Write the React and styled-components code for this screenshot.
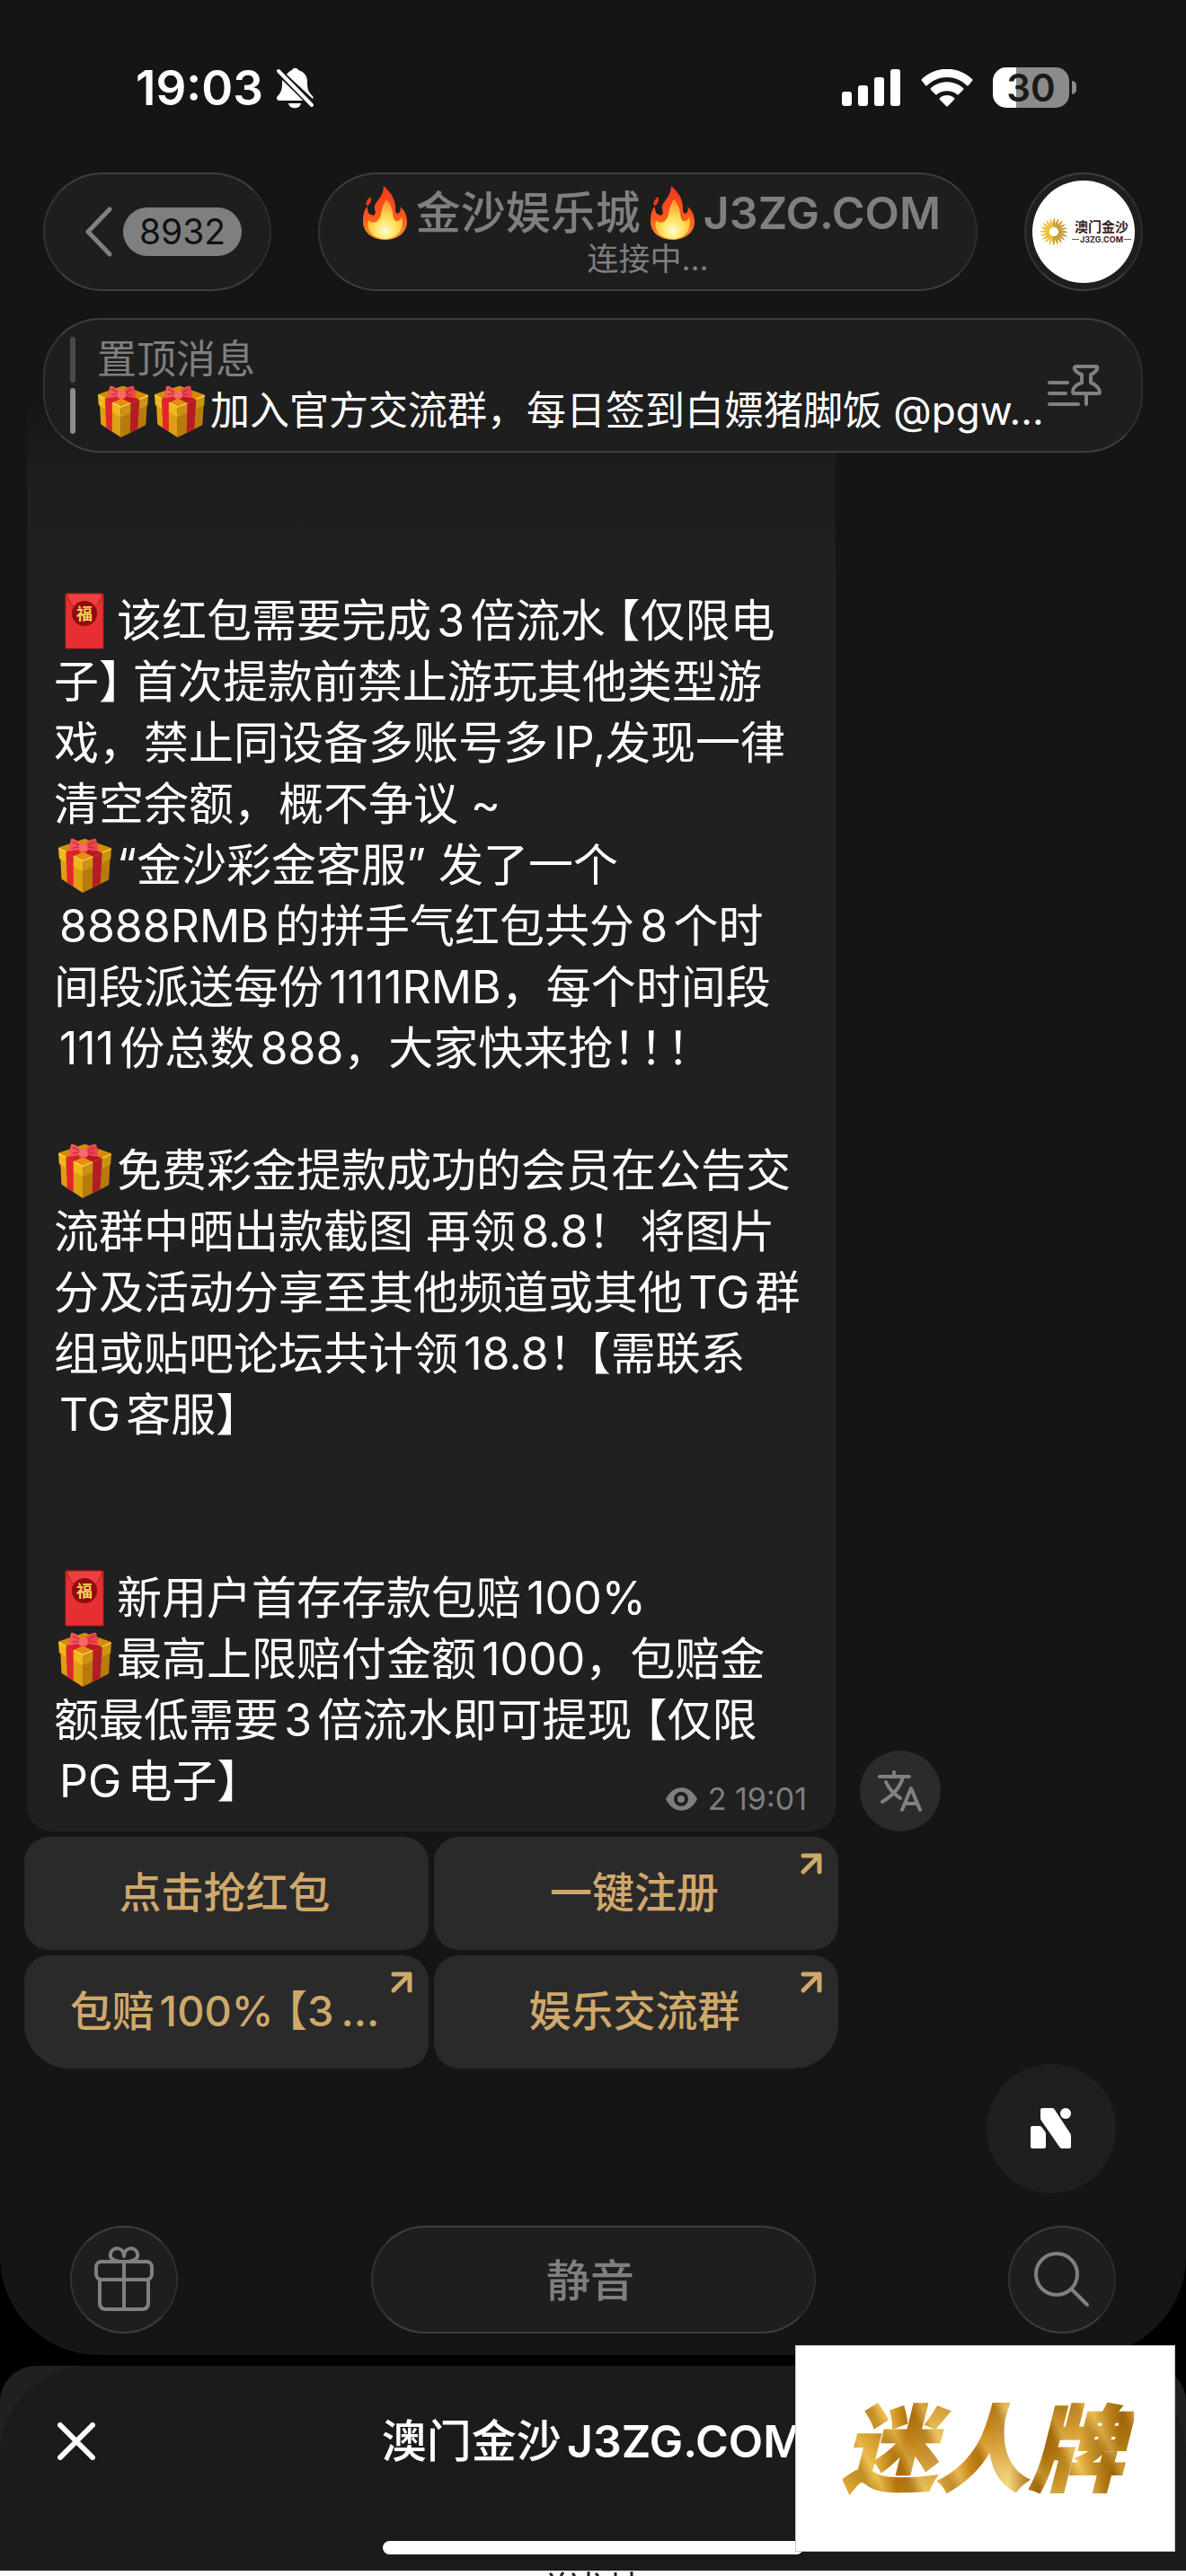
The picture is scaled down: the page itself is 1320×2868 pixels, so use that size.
import React from 'react';
import styled, { createGlobalStyle } from 'styled-components';

const GlobalStyle = createGlobalStyle`
  * {
    box-sizing: border-box;
  }

  body {
    margin: 0;
    background: #000;
    color: #fff;
    font-family: Inter, 'Noto Sans CJK SC', sans-serif;
    text-autospace: normal;
  }

  button {
    margin: 0;
    padding: 0;
    border: 0;
    color: inherit;
    background: none;
    font: inherit;
    cursor: pointer;
  }

  svg {
    display: block;
    flex: none;
  }
`;

const Page = styled.div`
  position: relative;
  display: flex;
  flex-direction: column;
  min-height: 100vh;
  overflow: hidden;
`;

const Chat = styled.main`
  position: relative;
  flex: 1;
  display: flex;
  flex-direction: column;
  background: #151515;
  border-radius: 0 0 110px 110px;
`;

const Latin = styled.span`
  font-weight: 600;
`;

/* status bar */

const StatusBar = styled.div`
  display: flex;
  justify-content: space-between;
  align-items: center;
  height: 192px;
  padding: 3px 122px 0 151px;
`;

const StatusGroup = styled.div`
  display: flex;
  align-items: center;
  gap: ${({ $gap }) => $gap}px;
`;

const Time = styled.span`
  font-size: 53px;
  font-weight: 600;
  line-height: 60px;
`;

const Battery = styled.div`
  display: flex;
  align-items: center;
  gap: 3px;
`;

const BatteryBody = styled.div`
  width: 85px;
  height: 45px;
  border-radius: 15px;
  background: linear-gradient(90deg, #fff 26px, #8b8b8b 26px);
  color: #1a1a1a;
  font-size: 42px;
  font-weight: 600;
  line-height: 45px;
  text-align: center;
`;

const BatteryCap = styled.div`
  width: 5px;
  height: 15px;
  border-radius: 0 8px 8px 0;
  background: #8b8b8b;
`;

/* header */

const Header = styled.header`
  display: flex;
  gap: 52px;
  padding: 0 48px;
`;

const glass = `
  border: 2px solid;
  border-color: #3e3e3e #2d2d2d #3e3e3e #333;
  background: #1e1e1e;
`;

const BackButton = styled.button`
  ${glass}
  display: flex;
  align-items: center;
  justify-content: center;
  gap: 12px;
  width: 254px;
  height: 132px;
  padding-right: 14px;
  padding-left: 28px;
  border-radius: 66px;
`;

const Unread = styled.span`
  height: 54px;
  padding: 0 18px;
  border-radius: 27px;
  background: #7f7f7f;
  color: #111;
  font-size: 39px;
  line-height: 54px;
`;

const TitlePill = styled.button`
  ${glass}
  flex: 1;
  display: flex;
  flex-direction: column;
  align-items: center;
  height: 132px;
  padding-top: 12px;
  border-radius: 66px;
  white-space: nowrap;
`;

const Title = styled.span`
  display: flex;
  align-items: center;
  gap: 10px;
  padding-left: 8px;
  color: #7f7f7f;
  font-size: 50px;
  font-weight: 500;
  line-height: 62px;
`;

const Subtitle = styled.span`
  color: #7f7f7f;
  font-size: 35px;
  line-height: 40px;
`;

const AvatarButton = styled.button`
  ${glass}
  display: grid;
  place-items: center;
  width: 132px;
  height: 132px;
  border-radius: 50%;
`;

const AvatarFace = styled.span`
  display: flex;
  align-items: center;
  gap: 3px;
  width: 114px;
  height: 114px;
  padding-left: 7px;
  border-radius: 50%;
  background: #fff;
  color: #3b2424;
`;

const AvatarText = styled.span`
  display: flex;
  flex-direction: column;
  align-items: center;
  font-size: 15px;
  font-weight: 700;
  line-height: 17px;
`;

const AvatarDomain = styled.small`
  display: flex;
  align-items: center;
  gap: 1px;
  font-size: 9px;
  line-height: 11px;

  &::before,
  &::after {
    content: '';
    width: 8px;
    height: 1px;
    background: #6b5a50;
  }
`;

const Pinned = styled.section`
  ${glass}
  position: relative;
  z-index: 1;
  display: flex;
  align-items: center;
  height: 150px;
  margin: 30px 48px 0;
  padding: 0 44px 0 28px;
  border-radius: 64px;
`;

const PinnedBars = styled.div`
  display: grid;
  gap: 6px;
  margin-right: 24px;
`;

const PinnedBar = styled.span`
  width: 6px;
  height: 51px;
  border-radius: 3px;
  background: ${({ $active }) => ($active ? '#8c8c8c' : '#4a4a4a')};
`;

const PinnedText = styled.div`
  flex: 1;
  min-width: 0;
  font-size: 44px;
  line-height: 57px;
  white-space: nowrap;
`;

const PinnedLabel = styled.div`
  color: #7f7f7f;
`;

const PinnedMessage = styled.div`
  display: flex;
  align-items: center;
  gap: 5px;
`;

const PinButton = styled.button`
  align-self: center;
`;

/* message */

const MessageRow = styled.div`
  display: flex;
  align-items: flex-end;
  gap: 27px;
  margin-top: -60px;
  padding: 0 30px;
`;

const Bubble = styled.article`
  width: 900px;
  padding: 213px 32px 22px 30px;
  border-radius: 0 0 28px 28px;
  background: linear-gradient(#151515, #1d1d1d 80px, #202020 200px);
`;

const Line = styled.div`
  display: flex;
  align-items: center;
  height: 68px;
  padding-left: ${({ $indent }) => ($indent ? 6 : 0)}px;
  font-size: 50px;
  line-height: 68px;
  white-space: pre;
`;

const EmojiCell = styled.span`
  display: inline-flex;
  justify-content: center;
  width: 68px;
  margin-right: 2px;
`;

/* full-width punctuation set on a narrower body */
const Open = styled.span`
  margin-left: 14px;
  font-feature-settings: 'halt';
`;

const Close = styled.span`
  margin-right: 13px;
  font-feature-settings: 'halt';
`;

const Mark = styled.span`
  margin-right: 5px;
  font-feature-settings: 'halt';
`;

const Meta = styled.span`
  display: flex;
  align-items: center;
  align-self: flex-end;
  gap: 11px;
  margin-left: auto;
  color: #7f7f7f;
  font-size: 34px;
  line-height: 28px;
`;

const TranslateButton = styled.button`
  display: grid;
  place-items: center;
  width: 90px;
  height: 90px;
  border-radius: 50%;
  background: #2b2b2b;
`;

const Keyboard = styled.div`
  display: grid;
  grid-template-columns: 1fr 1fr;
  gap: 6px;
  width: 906px;
  margin: 6px 27px 0;
`;

const KeyButton = styled.button`
  position: relative;
  height: 126px;
  padding-right: 4px;
  padding-bottom: 10px;
  border-radius: 28px;
  background: #2a2a2a;
  color: #cfa86b;
  font-size: 47px;
  font-weight: 500;
  white-space: pre;

  &:nth-child(3) {
    border-bottom-left-radius: 50px;
  }

  &:nth-child(4) {
    border-bottom-right-radius: 50px;
  }

  svg {
    position: absolute;
    top: 17px;
    right: 17px;
  }
`;

const Dots = styled.span`
  margin-left: 8px;
`;

const AssistButton = styled.button`
  position: absolute;
  right: 78px;
  bottom: 180px;
  display: grid;
  place-items: center;
  width: 144px;
  height: 144px;
  border-radius: 50%;
  background: #1f1f1f;
`;

const Dock = styled.footer`
  display: flex;
  justify-content: space-between;
  margin-top: auto;
  padding: 60px 78px 24px;
`;

const RoundButton = styled.button`
  ${glass}
  display: grid;
  place-items: center;
  width: 120px;
  height: 120px;
  border-radius: 50%;
`;

const MuteButton = styled.button`
  ${glass}
  width: 495px;
  height: 120px;
  padding-right: 6px;
  padding-bottom: 6px;
  border-radius: 60px;
  color: #7f7f7f;
  font-size: 49px;
  font-weight: 500;
`;

/* bottom sheet */

const Sheet = styled.section`
  margin-top: 12px;
  border-radius: 40px 40px 0 0;
  background: #202020;
`;

const SheetInner = styled.div`
  display: flex;
  flex-direction: column;
  align-items: center;
  height: 228px;
  border-radius: 100px 100px 0 0;
  background: #1b1b1b;
`;

const SheetBar = styled.div`
  display: grid;
  grid-template-columns: 1fr auto 1fr;
  align-items: center;
  width: 100%;
  height: 168px;
  padding: 0 64px;
`;

const CloseButton = styled.button`
  justify-self: start;
`;

const SheetTitle = styled.h2`
  margin: 0;
  font-size: 50px;
  font-weight: 500;
  line-height: 60px;
`;

const HomeIndicator = styled.div`
  width: 468px;
  height: 15px;
  margin-top: 27px;
  border-radius: 8px;
  background: #fff;
`;

const NextStrip = styled.div`
  display: flex;
  justify-content: center;
  height: 6px;
  background: #fff;
`;

const BrandCard = styled.aside`
  position: absolute;
  right: 12px;
  bottom: 27px;
  display: grid;
  place-items: center;
  width: 423px;
  height: 230px;
  padding-right: 6px;
  padding-bottom: 12px;
  border: 1px solid #c6c6c6;
  background: #fff;
`;

const BrandText = styled.strong`
  padding: 0 12px;
  background:
    repeating-linear-gradient(62deg, #8a540055 0 5px, #ffe48a44 16px, #b8740033 29px, #8a540055 41px),
    linear-gradient(100deg, #c48a17, #e9b844 18%, #b97a0e 26%, #f0c765 38%, #c98514 50%, #f5d988 60%, #ab6d0a 70%, #eebc4d 80%, #a9700f 92%, #d9a32c);
  background-clip: text;
  color: transparent;
  -webkit-text-stroke: 2px transparent;
  font-family: 'Noto Sans CJK SC', sans-serif;
  font-size: 104px;
  font-style: italic;
  font-weight: 900;
  line-height: 130px;
`;

const Gift = ({ size = 61 }) => (
  <svg width={size} height={size} viewBox="0 0 185 188" aria-hidden="true">
    <path d="M8 62 85 105V188L14 142Q12 140 12 137Z" fill="#dda012" />
    <path d="M85 105 179 66 175 138Q175 142 171 145L85 188Z" fill="#b97a0c" />
    <path d="M2 35Q2 32 6 31L92 2 180 33Q184 35 183 38L85 80Z" fill="#d58a0c" />
    <path d="M2 35 85 78V114L6 72Q4 71 4 68Z" fill="#f1b71e" />
    <path d="M183 37 85 78V114L178 74Q181 73 181 70Z" fill="#cb9314" />
    <path d="M2 35 85 78 183 37" fill="none" stroke="#ffd94a" strokeWidth="4" />
    <path d="M27 48 53 61V168L32 154Z" fill="#e0262b" />
    <path d="M120 64 152 51 145 157 118 171Z" fill="#b51c24" />
    <path d="M27 48 118 16 140 24 53 62Z" fill="#d81f2a" />
    <path d="M152 51 66 18 45 26 120 64Z" fill="#bd1722" />
    <path d="M64 59 85 48 108 59 85 76Z" fill="#e98b13" />
    <path d="M80 24C62 2 44-1 44 6L37 40Q38 48 46 45Q62 43 78 38Z" fill="#f2575b" />
    <path d="M92 24C110 2 131-1 132 6L138 40Q138 48 130 45Q114 43 96 38Z" fill="#ee4650" />
    <path d="M50 14Q62 16 76 30L50 34M126 14Q113 17 98 30L126 34" fill="none" stroke="#c92735" strokeWidth="4" />
    <rect x="72" y="20" width="30" height="28" rx="9" fill="#f7696b" />
  </svg>
);

const RedEnvelope = () => (
  <svg width="44" height="63" viewBox="0 0 44 63" aria-hidden="true">
    <rect x="1" y="1" width="42" height="61" rx="1" fill="#e72f31" stroke="#b31b1d" />
    <path d="M2 1Q6 15 13 17H31Q38 15 42 1Z" fill="#ef4041" stroke="#a91a1c" />
    <circle cx="22" cy="23" r="14" fill="#8f0d0f" />
    <text x="22" y="30" textAnchor="middle" fontSize="18" fontWeight="700" fill="#f6cf5a">福</text>
  </svg>
);

const Fire = () => (
  <svg width="50" height="60" viewBox="0 0 50 60" aria-hidden="true">
    <defs>
      <linearGradient id="flame" x1="0" y1="0" x2="0" y2="1">
        <stop offset="0" stopColor="#f4381c" />
        <stop offset="0.6" stopColor="#fb5a1c" />
        <stop offset="1" stopColor="#ff9a2a" />
      </linearGradient>
      <radialGradient id="flameCore" cx="0.5" cy="0.8" r="0.7">
        <stop offset="0" stopColor="#fffbd2" />
        <stop offset="0.45" stopColor="#ffe45a" />
        <stop offset="1" stopColor="#ff9d33" />
      </radialGradient>
    </defs>
    <path
      d="M24 0C31 6 38 15 37 26C37 31 40 32 42 29C43 27 43 25 42 23C48 27 50 34 50 40C50 52 39 60 26 60C12 60 1 52 1 40C1 33 2 26 6 23C6 28 7 31 10 32C14 34 16 31 14 26C12 18 24 14 24 0Z"
      fill="url(#flame)"
    />
    <path d="M9 12C12 16 8 22 5 22C3 19 6 15 9 12Z" fill="#f4381c" />
    <path
      d="M27 15C36 25 33 33 36 38C39 41 43 38 44 34C48 48 39 59 26 59C13 59 4 50 7 38C9 41 15 42 18 38C23 32 20 25 27 15Z"
      fill="url(#flameCore)"
    />
  </svg>
);

const BellOff = () => (
  <svg width="44" height="48" viewBox="0 0 44 48" fill="#fff" aria-hidden="true">
    <path d="M7 19V15L31 38H4C1 38 0 35 2 33C6 29 7 25 7 19Z" />
    <path d="M12 9C14 6 16 5 18 4C19 1 24 1 25 4C32 6 35 11 35 17C35 25 36 28 40 32C42 34 42 35 41 36Z" />
    <path d="M14 41H28C27 48 15 48 14 41Z" />
    <path d="M3 5 40 43" stroke="#151515" strokeWidth="7" />
    <path d="M3 5 40 43" stroke="#fff" strokeWidth="4" strokeLinecap="round" />
  </svg>
);

const Signal = () => (
  <svg width="66" height="42" viewBox="0 0 66 42" fill="#fff" aria-hidden="true">
    <rect y="25" width="11" height="16" rx="3" />
    <rect x="18" y="18" width="11" height="23" rx="3" />
    <rect x="36" y="9" width="11" height="32" rx="3" />
    <rect x="54" width="11" height="41" rx="3" />
  </svg>
);

const Wifi = () => (
  <svg width="58" height="42" viewBox="0 0 58 42" fill="#fff" aria-hidden="true">
    <path d="M1 11C17-4 41-4 57 11Q58 12 57 13L53 18Q52 19 51 18C38 6 20 6 7 18Q6 19 5 18L1 13Q0 12 1 11Z" />
    <path d="M11 21C21 12 37 12 47 21Q48 22 47 23L42 28Q41 29 40 28C34 23 24 23 18 28Q17 29 16 28L11 23Q10 22 11 21Z" />
    <path d="M21 32C25 28 33 28 37 32Q38 33 37 34L30 41Q29 42 28 41L21 34Q20 33 21 32Z" />
  </svg>
);

const rays = Array.from({ length: 20 }, (_, i) => i * 18);

const Sun = () => (
  <svg width="34" height="34" viewBox="-17 -17 34 34" aria-hidden="true">
    {rays.map((angle) => (
      <path
        key={angle}
        d="M5 0Q10-3 16 1Q10 1 5 2Z"
        fill={angle > 90 && angle < 260 ? '#edc02f' : '#c79a35'}
        transform={`rotate(${angle})`}
      />
    ))}
  </svg>
);

const PinList = () => (
  <svg width="60" height="48" viewBox="0 0 60 48" fill="none" stroke="#808080" strokeWidth="4" strokeLinecap="round" strokeLinejoin="round" aria-hidden="true">
    <path d="M2 21H22M2 33H20M2 45H34M43 33V45" />
    <path d="M32 3H54Q56 3 55 6Q53 10 48 12V21C54 23 58 28 58 32Q58 33 56 33H30Q28 33 28 31C28 27 32 23 38 21V12Q32 10 30 6Q29 3 32 3Z" />
  </svg>
);

const Eye = () => (
  <svg width="37" height="26" viewBox="0 0 37 26" aria-hidden="true">
    <path
      d="M1 13C9-4 28-4 36 13C28 30 9 30 1 13ZM18 5A8 8 0 1 0 18 21A8 8 0 1 0 18 5Z"
      fill="#7f7f7f"
      fillRule="evenodd"
    />
    <circle cx="18" cy="13" r="4" fill="#7f7f7f" />
  </svg>
);

const Translate = () => (
  <svg width="50" height="46" viewBox="0 0 50 46" fill="none" stroke="#808080" strokeWidth="4" strokeLinecap="round" strokeLinejoin="round" aria-hidden="true">
    <path d="M2 7H35M18 2V7M28 7C25 20 15 29 5 35M9 13C13 22 18 26 25 31" />
    <path d="M27 44 37 20 47 44M31 37H44" />
  </svg>
);

const ArrowOut = () => (
  <svg width="26" height="26" viewBox="0 0 26 26" fill="none" stroke="#cfa86b" strokeWidth="5" strokeLinecap="round" strokeLinejoin="round" aria-hidden="true">
    <path d="M4 4H22V22M22 4 4 22" />
  </svg>
);

const AssistLogo = () => (
  <svg width="46" height="46" viewBox="0 0 46 46" fill="#fff" aria-hidden="true">
    <path d="M2 20H10Q12 20 13 22L16 26Q17 27 17 29V43Q17 45 15 45H2Q0 45 0 43V22Q0 20 2 20Z" />
    <path d="M13 0H24Q26 0 27 2L44 28Q45 29 45 31V43Q45 45 43 45H35Q33 45 32 43L12 14Q11 13 11 11V2Q11 0 13 0Z" />
    <circle cx="39" cy="6" r="6" />
  </svg>
);

const GiftOutline = () => (
  <svg width="66" height="74" viewBox="-1 0 66 74" fill="none" stroke="#808080" strokeWidth="4" strokeLinejoin="round" aria-hidden="true">
    <rect x="1" y="17" width="62" height="20" rx="6" />
    <path d="M5 37V63Q5 70 12 70H52Q59 70 59 63V37M32 17V70" />
    <path d="M32 17C18 17 16 12 17 8C19 0 32 0 32 11C32 0 45 0 47 8C48 12 46 17 32 17Z" />
  </svg>
);

const Search = () => (
  <svg width="62" height="62" viewBox="0 0 62 62" fill="none" stroke="#808080" strokeWidth="4" strokeLinecap="round" aria-hidden="true">
    <circle cx="25" cy="25" r="23" />
    <path d="M42 42 59 59" />
  </svg>
);

const GiftCell = () => (
  <EmojiCell>
    <Gift />
  </EmojiCell>
);

const EnvelopeCell = () => (
  <EmojiCell>
    <RedEnvelope />
  </EmojiCell>
);

const keys = [
  { id: 'grab', label: '点击抢红包' },
  { id: 'register', label: '一键注册', link: true },
  { id: 'refund', label: <>包赔100%<Open>【</Open>3<Dots>...</Dots></>, link: true },
  { id: 'group', label: '娱乐交流群', link: true },
];

const Message = () => (
  <Bubble>
    <Line><EnvelopeCell /><span>该红包需要完成3倍流水<Open>【</Open>仅限电</span></Line>
    <Line><span>子<Close>】</Close>首次提款前禁止游玩其他类型游</span></Line>
    <Line>戏，禁止同设备多账号多IP,发现一律</Line>
    <Line>清空余额，概不争议 ~</Line>
    <Line><GiftCell />“金沙彩金客服” 发了一个</Line>
    <Line $indent>8888RMB的拼手气红包共分8个时</Line>
    <Line>间段派送每份1111RMB，每个时间段</Line>
    <Line $indent><span>111份总数888，大家快来抢<Mark>！</Mark><Mark>！</Mark><Mark>！</Mark></span></Line>
    <Line />
    <Line><GiftCell />免费彩金提款成功的会员在公告交</Line>
    <Line><span>流群中晒出款截图 再领8.8<Mark>！</Mark>{'  '}将图片</span></Line>
    <Line>分及活动分享至其他频道或其他TG群</Line>
    <Line><span>组或贴吧论坛共计领18.8<Mark>！</Mark><Open>【</Open>需联系</span></Line>
    <Line $indent>TG客服】</Line>
    <Line />
    <Line />
    <Line><EnvelopeCell />新用户首存存款包赔100%</Line>
    <Line><GiftCell />最高上限赔付金额1000，包赔金</Line>
    <Line><span>额最低需要3倍流水即可提现<Open>【</Open>仅限</span></Line>
    <Line $indent>
      PG电子】
      <Meta><Eye />2 19:01</Meta>
    </Line>
  </Bubble>
);

const App = () => (
  <Page>
    <GlobalStyle />
    <Chat>
      <StatusBar>
        <StatusGroup $gap={14}>
          <Time>19:03</Time>
          <BellOff />
        </StatusGroup>
        <StatusGroup $gap={22}>
          <Signal />
          <Wifi />
          <Battery>
            <BatteryBody>30</BatteryBody>
            <BatteryCap />
          </Battery>
        </StatusGroup>
      </StatusBar>

      <Header>
        <BackButton aria-label="返回 8932">
          <svg width="30" height="56" viewBox="0 0 30 56" fill="none" stroke="#808080" strokeWidth="5" strokeLinecap="round" strokeLinejoin="round">
            <path d="M27 3 3 28 27 53" />
          </svg>
          <Unread>8932</Unread>
        </BackButton>
        <TitlePill>
          <Title>
            <Fire />
            金沙娱乐城
            <Fire />
            <Latin>J3ZG.COM</Latin>
          </Title>
          <Subtitle>连接中...</Subtitle>
        </TitlePill>
        <AvatarButton>
          <AvatarFace>
            <Sun />
            <AvatarText>
              澳门金沙
              <AvatarDomain>J3ZG.COM</AvatarDomain>
            </AvatarText>
          </AvatarFace>
        </AvatarButton>
      </Header>

      <Pinned>
        <PinnedBars>
          <PinnedBar />
          <PinnedBar $active />
        </PinnedBars>
        <PinnedText>
          <PinnedLabel>置顶消息</PinnedLabel>
          <PinnedMessage>
            <Gift size={58} />
            <Gift size={58} />
            加入官方交流群，每日签到白嫖猪脚饭 @pgw...
          </PinnedMessage>
        </PinnedText>
        <PinButton aria-label="置顶消息">
          <PinList />
        </PinButton>
      </Pinned>

      <MessageRow>
        <Message />
        <TranslateButton aria-label="翻译">
          <Translate />
        </TranslateButton>
      </MessageRow>

      <Keyboard>
        {keys.map(({ id, label, link }) => (
          <KeyButton key={id}>
            {label}
            {link && <ArrowOut />}
          </KeyButton>
        ))}
      </Keyboard>

      <AssistButton aria-label="助手">
        <AssistLogo />
      </AssistButton>

      <Dock>
        <RoundButton aria-label="礼物">
          <GiftOutline />
        </RoundButton>
        <MuteButton>静音</MuteButton>
        <RoundButton aria-label="搜索">
          <Search />
        </RoundButton>
      </Dock>
    </Chat>

    <Sheet>
      <SheetInner>
        <SheetBar>
          <CloseButton aria-label="关闭">
            <svg width="42" height="42" viewBox="0 0 42 42" stroke="#fff" strokeWidth="6" strokeLinecap="round">
              <path d="M3 3 39 39M39 3 3 39" />
            </svg>
          </CloseButton>
          <SheetTitle>澳门金沙<Latin>J3ZG.COM</Latin></SheetTitle>
        </SheetBar>
        <HomeIndicator />
      </SheetInner>
    </Sheet>
    <NextStrip>
      <svg width="108" height="6" viewBox="0 0 108 6" stroke="#222" strokeWidth="3" aria-hidden="true">
        <path d="M6 3 9 6M21 2 18 6M31 3 34 6M49 1V6M57 3 60 6M79 2V6M97 1V6" />
      </svg>
    </NextStrip>

    <BrandCard>
      <BrandText>迷人牌</BrandText>
    </BrandCard>
  </Page>
);

export default App;
